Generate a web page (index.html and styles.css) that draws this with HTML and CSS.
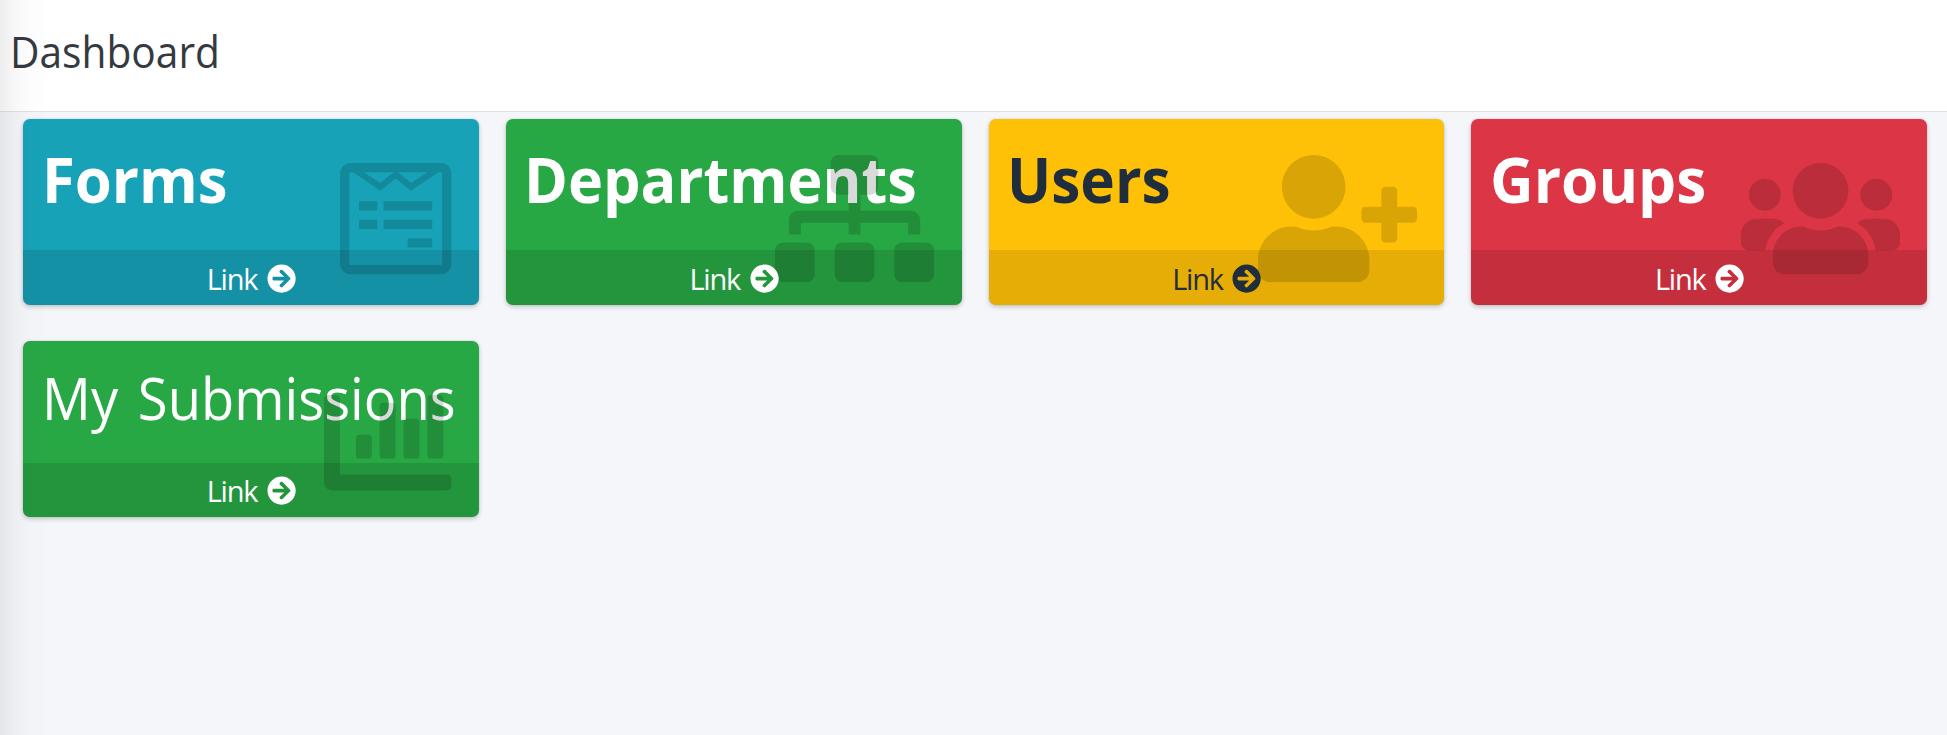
FILE: index.html
```html
<!DOCTYPE html>
<html lang="en">
<head>
<meta charset="utf-8">
<title>Dashboard</title>
<link rel="stylesheet" href="styles.css">
</head>
<body>
<svg class="defs" aria-hidden="true">
  <symbol id="arrow" viewBox="0 0 512 512"><path d="M256 8c137 0 248 111 248 248S393 504 256 504 8 393 8 256 119 8 256 8zm-28.9 143.6l75.5 72.4H120c-13.3 0-24 10.7-24 24v16c0 13.3 10.7 24 24 24h182.6l-75.5 72.4c-9.7 9.3-9.9 24.8-.4 34.3l11 10.9c9.4 9.4 24.6 9.4 33.9 0L404.3 273c9.4-9.4 9.4-24.6 0-33.9L271.6 106.3c-9.4-9.4-24.6-9.4-33.9 0l-11 10.9c-9.5 9.6-9.3 25.1.4 34.4z"/></symbol>
</svg>
<header class="page-header"><h1 class="page-title">Dashboard</h1></header>
<main class="grid">
  <section class="box info">
    <div class="inner"><h3 class="name forms">Forms</h3></div>
    <svg class="icon" viewBox="0 0 448 512"><path d="M448 75.2v361.7c0 24.3-19 43.2-43.2 43.2H43.2C19.3 480 0 461.4 0 436.8V75.2C0 51.1 18.8 32 43.2 32h361.7c24 0 43.1 18.8 43.1 43.2zm-37.3 361.6V75.2c0-3-2.6-5.8-5.8-5.8h-9.3L285.3 144 224 94.1 162.8 144 52.5 69.3h-9.3c-3.2 0-5.8 2.8-5.8 5.8v361.7c0 3 2.6 5.8 5.8 5.8h361.7c3.2.1 5.8-2.7 5.8-5.8zM150.2 186v37H76.7v-37h73.5zm0 74.4v37.3H76.7v-37.3h73.5zm11.1-147.3l54-43.7H96.8l64.5 43.7zm210 72.9v37h-196v-37h196zm0 74.4v37.3h-196v-37.3h196zm-84.6-147.3l64.5-43.7H232.8l53.9 43.7zM371.3 335v37.3h-99.4V335h99.4z"/></svg>
    <a class="footer"><span class="link">Link</span><svg class="arrow"><use href="#arrow"/></svg></a>
  </section>
  <section class="box success">
    <div class="inner"><h3 class="name departments">Departments</h3></div>
    <svg class="icon" viewBox="0 0 640 512"><path d="M128 352H32c-17.67 0-32 14.33-32 32v96c0 17.67 14.33 32 32 32h96c17.67 0 32-14.33 32-32v-96c0-17.67-14.33-32-32-32zm-24-80h192v48h48v-48h192v48h48v-57.59c0-21.17-17.23-38.41-38.41-38.41H344v-64h40c17.67 0 32-14.33 32-32V32c0-17.67-14.33-32-32-32H256c-17.67 0-32 14.33-32 32v96c0 17.67 14.33 32 32 32h40v64H94.41C73.23 224 56 241.23 56 262.41V320h48v-48zm264 80h-96c-17.67 0-32 14.33-32 32v96c0 17.67 14.33 32 32 32h96c17.67 0 32-14.33 32-32v-96c0-17.67-14.33-32-32-32zm240 0h-96c-17.67 0-32 14.33-32 32v96c0 17.67 14.33 32 32 32h96c17.67 0 32-14.33 32-32v-96c0-17.67-14.33-32-32-32z"/></svg>
    <a class="footer"><span class="link">Link</span><svg class="arrow"><use href="#arrow"/></svg></a>
  </section>
  <section class="box warning">
    <div class="inner"><h3 class="name users">Users</h3></div>
    <svg class="icon" viewBox="0 0 640 512"><path d="M624 208h-64v-64c0-8.8-7.2-16-16-16h-32c-8.8 0-16 7.2-16 16v64h-64c-8.8 0-16 7.2-16 16v32c0 8.8 7.2 16 16 16h64v64c0 8.8 7.2 16 16 16h32c8.8 0 16-7.2 16-16v-64h64c8.8 0 16-7.2 16-16v-32c0-8.8-7.2-16-16-16zm-400 48c70.7 0 128-57.3 128-128S294.7 0 224 0 96 57.3 96 128s57.3 128 128 128zm89.6 32h-16.7c-22.2 10.2-46.9 16-72.9 16s-50.6-5.8-72.9-16h-16.7C60.2 288 0 348.2 0 422.4V464c0 26.5 21.5 48 48 48h352c26.5 0 48-21.5 48-48v-41.6c0-74.2-60.2-134.4-134.4-134.4z"/></svg>
    <a class="footer"><span class="link">Link</span><svg class="arrow"><use href="#arrow"/></svg></a>
  </section>
  <section class="box danger">
    <div class="inner"><h3 class="name groups">Groups</h3></div>
    <svg class="icon" viewBox="0 0 640 512"><path d="M96 224c35.3 0 64-28.7 64-64s-28.7-64-64-64-64 28.7-64 64 28.7 64 64 64zm448 0c35.3 0 64-28.7 64-64s-28.7-64-64-64-64 28.7-64 64 28.7 64 64 64zm32 32h-64c-17.6 0-33.5 7.1-45.1 18.6 40.3 22.1 68.9 62 75.1 109.4h66c17.7 0 32-14.3 32-32v-32c0-35.3-28.7-64-64-64zm-256 0c61.9 0 112-50.1 112-112S381.9 32 320 32 208 82.1 208 144s50.1 112 112 112zm76.8 32h-8.3c-20.8 10-43.9 16-68.5 16s-47.6-6-68.5-16h-8.3C179.6 288 128 339.6 128 403.2V432c0 26.5 21.5 48 48 48h288c26.5 0 48-21.5 48-48v-28.8c0-63.6-51.6-115.2-115.2-115.2zm-223.7-13.4C161.5 263.1 145.6 256 128 256H64c-35.3 0-64 28.7-64 64v32c0 17.7 14.3 32 32 32h65.9c6.3-47.4 34.9-87.3 75.2-109.4z"/></svg>
    <a class="footer"><span class="link">Link</span><svg class="arrow"><use href="#arrow"/></svg></a>
  </section>
  <section class="box success plain">
    <div class="inner"><p class="name submissions">My Submissions</p></div>
    <svg class="icon" viewBox="0 0 512 512"><path d="M332.8 320h38.4c6.4 0 12.8-6.4 12.8-12.8V172.8c0-6.4-6.4-12.8-12.8-12.8h-38.4c-6.4 0-12.8 6.4-12.8 12.8v134.4c0 6.4 6.4 12.8 12.8 12.8zm96 0h38.4c6.4 0 12.8-6.4 12.8-12.8V76.8c0-6.4-6.4-12.8-12.8-12.8h-38.4c-6.4 0-12.8 6.4-12.8 12.8v230.4c0 6.4 6.4 12.8 12.8 12.8zm-288 0h38.4c6.4 0 12.8-6.4 12.8-12.8v-70.4c0-6.4-6.4-12.8-12.8-12.8h-38.4c-6.4 0-12.8 6.4-12.8 12.8v70.4c0 6.4 6.4 12.8 12.8 12.8zm96 0h38.4c6.4 0 12.8-6.4 12.8-12.8V108.8c0-6.4-6.4-12.8-12.8-12.8h-38.4c-6.4 0-12.8 6.4-12.8 12.8v198.4c0 6.4 6.4 12.8 12.8 12.8zM496 384H64V80c0-8.84-7.16-16-16-16H16C7.16 64 0 71.16 0 80v336c0 17.67 14.33 32 32 32h464c8.84 0 16-7.16 16-16v-32c0-8.84-7.16-16-16-16z"/></svg>
    <a class="footer"><span class="link">Link</span><svg class="arrow"><use href="#arrow"/></svg></a>
  </section>
</main>
<div class="edge-shadow"></div>
</body>
</html>
```
FILE: styles.css
```css
* { box-sizing: border-box; }
body {
  margin: 0;
  height: 735px;
  overflow: hidden;
  background: #f4f6f9;
  font-family: "Open Sans", "Noto Sans", sans-serif;
}
.defs { display: none; }
.page-header {
  height: 112px;
  padding: 22px 0 0 10px;
  background: #fff;
  border-bottom: 1px solid #dee2e6;
}
.page-title {
  margin: 0;
  color: #343a40;
  font-size: 43.5px;
  font-weight: 400;
  line-height: 60px;
  transform: scaleX(.935);
  transform-origin: left;
}
.grid {
  display: grid;
  grid-template-columns: repeat(4, minmax(0, 1fr));
  gap: 36px 27px;
  padding: 7px 20px 0 23px;
}
.box {
  position: relative;
  display: flex;
  flex-direction: column;
  height: 186px;
  border-radius: 7px;
  color: #fff;
  box-shadow: 0 0 2px rgba(0, 0, 0, .13), 0 2px 5px rgba(0, 0, 0, .2);
}
.info { background: #17a2b8; }
.success { background: #28a745; }
.warning { background: #ffc107; color: #1f2d3d; }
.danger { background: #dc3545; }
.inner { flex: 1; padding: 17px 0 0 18.5px; }
.name {
  margin: 0;
  font-size: 63.5px;
  font-weight: 700;
  line-height: 86px;
  white-space: nowrap;
  transform-origin: left;
}
.forms { transform: scaleX(.942); }
.departments { transform: scaleX(.935); }
.users { transform: scaleX(.922); }
.groups { transform: scaleX(.95); }
.icon {
  position: absolute;
  top: 36px;
  right: 27px;
  height: 127.3px;
  fill: rgba(0, 0, 0, .15);
}
.footer {
  position: relative;
  display: flex;
  justify-content: center;
  align-items: center;
  height: 55px;
  padding: 3px 0 0 1px;
  gap: 9.5px;
  background: rgba(0, 0, 0, .1);
  border-radius: 0 0 7px 7px;
}
.link { font-size: 29px; line-height: 40px; letter-spacing: -1.2px; }
.arrow { width: 29.2px; height: 29.2px; fill: currentColor; }
.plain { height: 176px; }
.plain .inner { padding-top: 14px; }
.plain .footer { height: 54px; padding-top: 2px; }
.plain .icon { top: 38px; }
.submissions {
  font-size: 58px;
  font-weight: 400;
  word-spacing: 6px;
  transform: scaleX(.937);
}
.edge-shadow {
  position: absolute;
  top: 0;
  left: 0;
  width: 48px;
  height: 735px;
  background: linear-gradient(90deg, rgba(0,0,0,.07), rgba(0,0,0,.03) 28%, rgba(0,0,0,.01) 60%, transparent);
}
```
